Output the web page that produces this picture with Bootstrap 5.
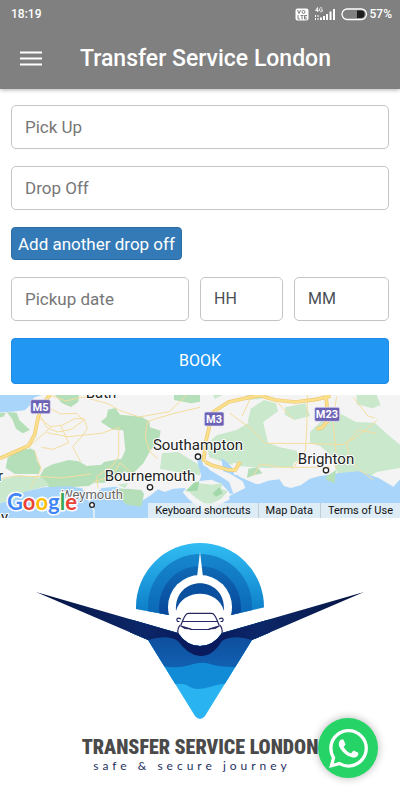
<!DOCTYPE html>
<html lang="en">
<head>
<meta charset="utf-8">
<meta name="viewport" content="width=device-width, initial-scale=1">
<title>Transfer Service London</title>
<link href="https://cdn.jsdelivr.net/npm/bootstrap@5.3.0/dist/css/bootstrap.min.css" rel="stylesheet">
<style>
body { font-family: Roboto, "Liberation Sans", sans-serif; background: #fff; color: #222; }
.app-header { background: #808080; color: #fff; box-shadow: 0 1px 4px rgba(0,0,0,.3); }
.status-bar { height: 28px; padding: 0 8px 0 11px; font-size: 12px; line-height: 28px; font-weight: 500; }
.status-bar svg { display: block; }
.title-bar { height: 61px; padding: 0 20px; gap: 38px; }
.title-bar h1 { font-size: 23px; line-height: 28px; font-weight: 500; }
.menu-btn { color: #fff; border: 0; border-radius: 0; line-height: 0; }
.booking { padding: 16px 11px 11px; gap: 17px; }
.field { height: 44px; padding: 0 13px; font-size: 17px; line-height: 24px; border: 1px solid #c4c4c4; border-radius: 5px; color: #495057; }
.field::placeholder { color: #777; opacity: 1; }
.time-row { display: grid; grid-template-columns: 178fr 83fr 95fr; gap: 11px; }
.time-row select { font-size: 16px; background-image: none; }
.add-btn { height: 33px; padding: 0 6px; font-size: 17px; line-height: 24px; background: #337ab7; border: 1px solid #2e6da4; border-radius: 4px; color: #fff; }
.book-btn { height: 46px; font-size: 16px; line-height: 24px; background: #2196f3; border: 1px solid #1d8be4; border-radius: 4px; color: #fff; }
.map-art text { font-family: Roboto, "Liberation Sans", sans-serif; paint-order: stroke; stroke: #fff; stroke-width: 2px; stroke-linejoin: round; fill: #222; font-size: 15px; }
.map-art .shield-label { font-size: 11px; font-weight: 700; fill: #fff; stroke: none; }
.map-art .faded-label { font-size: 13px; fill: #666; }
.map-art .map-brand { font-family: Lato, "Liberation Sans", sans-serif; font-size: 22px; font-weight: 700; stroke-width: 3px; }
.map-links { right: 0; bottom: 0; height: 15px; background: rgba(235,241,245,.8); font-size: 11px; line-height: 15px; }
.map-links a { color: #111; text-decoration: none; padding: 0 7px; }
.map-links a + a { border-left: 1px solid #c3ccd3; }
.brand { padding: 16px 30px 24px; }
.brand-name { font-family: "Roboto Condensed", "Open Sans Condensed", Roboto, sans-serif; font-size: 20px; line-height: 26px; font-weight: 900; color: #4a4a4a; }
.brand-tag { font-family: Lato, sans-serif; font-size: 12px; line-height: 12px; letter-spacing: 4px; color: #25315f; }
.chat-btn { right: 22px; bottom: 22px; width: 60px; height: 60px; background: #25d366; box-shadow: 0 0 8px rgba(0,0,0,.3); }
</style>
</head>
<body>
<header class="app-header position-relative">
  <div class="status-bar d-flex align-items-center justify-content-between">
    <span>18:19</span>
    <div class="d-flex align-items-center">
      <svg width="76" height="16" viewBox="294 5 76 16" aria-hidden="true">
        <rect x="295.500" y="7.500" width="13" height="12" rx="2" fill="#fff"/>
        <g fill="none" stroke="#808080" stroke-width="1"><path d="M297.500 9l1.500 3.500 1.500-3.500"/><circle cx="303.500" cy="11" r="1.500"/><path d="M298 14v4h2M300.500 14.500h3M302 14.500v4M307 14.500h-2.500v3.500h2.500M304.500 16.200h2"/></g>
        <g fill="none" stroke="#fff" stroke-width=".9"><path d="M317.600 11V6.500l-2 3h3M322.300 7.200c-1-.9-2.800-.5-2.800 1.600s1.800 2.500 2.800 1.400v-1.400h-1.300"/></g>
        <path d="M315.500 14v5M318 14v5" stroke="#fff" stroke-width="1" stroke-dasharray="2 1"/>
        <path d="M321 19v-2.500M324 19v-4M327 19v-6M330.500 19v-8.500M334 19V8" stroke="#fff" stroke-width="2"/>
        <rect x="342" y="8" width="24.500" height="10.500" rx="5.200" fill="none" stroke="#fff" stroke-width="1.300"/>
        <path d="M357 9.500h4q3.500 0 3.500 3.700t-3.500 3.800h-4z" fill="#1d1d1d"/>
      </svg>
      <span>57%</span>
    </div>
  </div>
  <div class="title-bar d-flex align-items-center">
    <button type="button" class="menu-btn btn p-0" aria-label="Menu">
      <svg width="22" height="16" viewBox="0 0 22 16"><path d="M0 1.500h22M0 7.500h22M0 13.500h22" stroke="#fff" stroke-width="2.200"/></svg>
    </button>
    <h1 class="m-0 text-nowrap">Transfer Service London</h1>
  </div>
</header>
<main>
  <form class="booking d-flex flex-column">
    <input class="field form-control" type="text" placeholder="Pick Up" aria-label="Pick Up">
    <input class="field form-control" type="text" placeholder="Drop Off" aria-label="Drop Off">
    <button type="button" class="add-btn btn align-self-start">Add another drop off</button>
    <div class="time-row">
      <input class="field form-control" type="text" placeholder="Pickup date" aria-label="Pickup date">
      <select class="field form-control" aria-label="Hour"><option>HH</option></select>
      <select class="field form-control" aria-label="Minute"><option>MM</option></select>
    </div>
    <button type="button" class="book-btn btn p-0 w-100">BOOK</button>
  </form>
  <section class="position-relative overflow-hidden" aria-label="Map">
    <svg class="map-art d-block w-100" viewBox="0 5 400 123">
      <rect y="5" width="400" height="123" fill="#f4f4f4"/>
      <g transform="scale(.33333)">
        <g fill="#b4dfb8">
          <path d="M20 66l30 2 8 22 32 30-22 10-20-14-12-30zM165 15h72l-2 20-22 16-28-12zM0 68l18 0-8 12-10 2zM85 172l20 10 6 32 12 16-8 22-70 0-28-18 6-30 26-24 42-4z"/>
          <path d="M132 236l22-12 52-14 30 4 24 14 44-4 8-8 50-10 14 20-4 24-44 22-16 6-30 0-16 10-60 4-50 2-30-12-6-24z"/>
          <path d="M302 95l18-14 4-22 22-5 14 20 64 6 24 14 2 18 32 10-6 34-24 24-22 40-26 25-14 8-20-12-6-34 12-26-6-60-30-2-18-10z"/>
          <path d="M522 15h78v20l-26 5-52-10z"/>
        </g>
        <g fill="#cae8cc">
          <path d="M0 270l58-14 70 8 20 22-60 16-40 40-48-4zM486 190l48-4 66 40v30l-70-10-50-10zM352 284l32-4-8 14z"/>
          <path d="M620 162l30-26 60-16 40-24 40 2 14 60 36 14 50 10 8 28-40 22-60 2-90-6-80-26zM744 92l8-36 40-26 36 10 6 24-28 20-26 20-32 8zM856 52l60-12 14 38-46 12-30-16zM930 126l34-32 48-28 56 30 56 2 40 36 36 30v70l-70 12-60 40-54-24-10-28-10-36-36-30-30-10zM640 15h28l-24 12zM740 15h60l-20 12-44 4zM1070 15h60l12 30-24 10-48-12zM840 226l24-26 26-6-14 40z"/>
        </g>
        <g fill="#a9d5fb">
          <path d="M0 15h125l-24 8-8 20-18 18-42 4-33 2z"/>
          <path d="M0 340l40-10 32-24 60-14 74-3 40 6 16 24 8 28 10 14v23H0z"/>
          <path d="M284 384l0-24-16-24 14-20 24-22 40-4 40 14 44 26 22-14 22-18 20 8 26-10 34-2 32 30h80l14-2 56-28-8-20-40-24-18-6-6-40 20 14 34 42 50 22 10 0 26-10 34-4 14 20 20 6 30-8 28-20 30-8 66-10 50-4 60 20 44 26 28-30 36-8 45-10v156z"/>
          <path d="M590 205l14-2 24 36 40 24 20 14 12 34-40 0-44-6-26-16 14-30z"/>
        </g>
        <path d="M352 296l30 0 42 4 8 12-8 38-44-6-24-22z" fill="#b4dfb8"/>
        <path d="M548 307l18-20 34-14 34-4 30 12 24 26 0 22-32 16-32 20-24-8-34-30z" fill="#f4f4f4"/>
        <path d="M560 300l36-20 40 4 30-4-2 16 20 8-22 24-40 18-34-22z" fill="#cae8cc"/>
        <path d="M556 304l26-26 16-4-6 28zM638 310l20-18 10 18-20 10z" fill="#a2d8aa"/>
        <path d="M636 240l-26-14-8-28 18-6 6 34 16 16M698 218l22 4-4 34-14-2z" fill="#f4f4f4"/>
        <path d="M745 236l28-4 14 18-26 6-20 8zM976 262l32-22-4 40-24-10z" fill="#b4dfb8"/>
        <g fill="none" stroke="#f5dda0" stroke-width="3">
          <path d="M132 46l50 26 48-2 20 22-36 26-42 8-32-14-22-40M148 15l50 18 50-12 76 20 34 20 60 20 90-16 50-48M112 80l40 30 34-4 38-20 28 0 10 30-22 30-22 24 24 46M94 164l32-28 28-26M140 128l64 12 100-10 52-18M160 178l46-20-24-52M160 178l-36-6M356 112v86l-16 26-50 36 4 36M442 94l-6 48 14 44 24 20M442 94l80-24 78-18M280 276l56-18 24-40 40 36M104 184l20 54-32 52M0 266l46-8 82 2 54 4 90-12"/>
          <path d="M726 78l24-50 50-13M690 70l60 44 46 46 120 0 110 4 46-24 60-50M922 15l0 20-2 86-4 60-40 58M1010 20l-12 68 10 100 0 50M1040 160l36-40 54 10M1080 240l40 30M760 258l20-36 60 10 150 0M820 24l60 64M1000 70l-14 30M1060 22l44 56 20 6M1040 160l8 40 24 34"/>
        </g>
        <g fill="none" stroke="#efc76b" stroke-width="11"><path d="M150 15l-28 34-12 54-6 30-18 34-36 16-50 22M610 216l8-64 12-50 10-36 46-30 80-18 28-3M616 216l20 10 50 14 20 0 14-24M784 18l42 12 60 6 64-8 42-10M978 15l6 76-18 22-16 4"/></g>
        <g fill="none" stroke="#fbe08d" stroke-width="7"><path d="M150 15l-28 34-12 54-6 30-18 34-36 16-50 22M610 216l8-64 12-50 10-36 46-30 80-18 28-3M616 216l20 10 50 14 20 0 14-24M784 18l42 12 60 6 64-8 42-10M978 15l6 76-18 22-16 4"/></g>
        <g fill="#6d63b5" stroke="#e4e0f6" stroke-width="2"><rect x="92" y="29" width="59" height="42" rx="5"/><rect x="613" y="66" width="59" height="42" rx="5"/><rect x="944" y="52" width="75" height="42" rx="5"/></g>
        <g fill="#fff" stroke="#222" stroke-width="4"><circle cx="594" cy="200" r="8"/><circle cx="450" cy="292" r="8"/><circle cx="276" cy="345" r="7"/><circle cx="978" cy="241" r="8"/></g>
      </g>
      <text class="shield-label" x="40.500" y="21" text-anchor="middle">M5</text>
      <text class="shield-label" x="214" y="33" text-anchor="middle">M3</text>
      <text class="shield-label" x="327" y="28" text-anchor="middle">M23</text>
      <text x="101" y="8" text-anchor="middle">Bath</text>
      <text x="198" y="60" text-anchor="middle">Southampton</text>
      <text x="150" y="91" text-anchor="middle">Bournemouth</text>
      <text x="326" y="74" text-anchor="middle">Brighton</text>
      <text class="faded-label" x="92" y="109" text-anchor="middle">Weymouth</text>
      <text x="3" y="91" text-anchor="end">Exeter</text>
      <text x="8" y="132" text-anchor="end">Torquay</text>
      <text class="map-brand" x="7" y="120"><tspan fill="#4285f4">G</tspan><tspan fill="#ea4335">o</tspan><tspan fill="#fbbc05">o</tspan><tspan fill="#4285f4">g</tspan><tspan fill="#34a853">l</tspan><tspan fill="#ea4335">e</tspan></text>
    </svg>
    <nav class="map-links position-absolute d-flex text-nowrap" aria-label="Map links"><a href="#">Keyboard shortcuts</a><a href="#">Map Data</a><a href="#">Terms of Use</a></nav>
  </section>
  <section class="brand text-center">
    <svg class="d-block w-100" viewBox="30 534 340 200" aria-hidden="true">
      <defs>
        <linearGradient id="g1" x1="0" y1="0" x2="0" y2="1"><stop offset="0" stop-color="#31bdf3"/><stop offset=".55" stop-color="#0c7dc8"/></linearGradient>
        <linearGradient id="g2" x1="0" y1="0" x2="0" y2="1"><stop offset="0" stop-color="#1686cd"/><stop offset=".6" stop-color="#0b68b7"/></linearGradient>
        <linearGradient id="g3" x1="0" y1="0" x2="0" y2="1"><stop offset="0" stop-color="#0f6ab5"/><stop offset=".6" stop-color="#07479a"/></linearGradient>
        <linearGradient id="g4" x1="0" y1="0" x2="0" y2="1"><stop offset="0" stop-color="#0d4592"/><stop offset="1" stop-color="#1160b2"/></linearGradient>
        <linearGradient id="g5" x1="0" y1="0" x2="1" y2="0"><stop offset="0" stop-color="#071440"/><stop offset=".33" stop-color="#0c2768"/><stop offset=".45" stop-color="#091b5c"/><stop offset=".55" stop-color="#091b5c"/><stop offset=".67" stop-color="#0c2768"/><stop offset="1" stop-color="#071440"/></linearGradient>
        <clipPath id="arch"><path d="M130 536H270V606L231 615H169L130 608z"/></clipPath>
        <clipPath id="cone"><path d="M36 592L178 633Q187 646 200 646T222 633L364 592L252 640L205 716Q200 722 195 716L148 640z"/></clipPath>
      </defs>
      <g clip-path="url(#arch)">
        <circle cx="200" cy="607" r="64" fill="url(#g1)"/>
        <circle cx="200" cy="606" r="52" fill="url(#g2)"/>
        <circle cx="200" cy="607" r="41" fill="url(#g3)"/>
        <circle cx="200" cy="607" r="32" fill="#fff"/>
      </g>
      <path d="M200 552L203 577H197z" fill="#fff"/>
      <path d="M176 611C174 574 226 574 224 611C218 588 182 588 176 611z" fill="#0b4f9f"/>
      <g clip-path="url(#cone)">
        <rect x="130" y="590" width="140" height="132" fill="#29b4f1"/>
        <path d="M130 684h46q8-1 14 3t20 0 16-3h44v-54H130z" fill="#118bd6"/>
        <path d="M130 666h32q16 3 28-1t20-1 24 3h36v-47H130z" fill="url(#g4)"/>
        <path d="M30 590H370V640H252Q233 634 222 641Q212 657 200 656T178 641Q167 634 148 640H30z" fill="url(#g5)"/>
      </g>
      <g fill="none" stroke="#25275f" stroke-width="1.200" stroke-linejoin="round">
        <path d="M181 625Q185 613.500 188 613.300H212Q215 613.500 219 625M183 621.500H217M180.500 625Q177 628 178 634M219.500 625Q223 628 222 634M181 619c-4-2-5 0-3.500 2.500h2M219 619c4-2 5 0 3.500 2.500h-2M190 629.500H210"/>
        <path d="M181 626l10 3-6-.5zM219 626l-10 3 6-.5z" fill="#7885b5"/>
      </g>
    </svg>
    <div class="brand-name text-nowrap">TRANSFER SERVICE LONDON</div>
    <div class="brand-tag text-nowrap pe-3">safe &amp; secure journey</div>
  </section>
</main>
<a href="#" class="chat-btn position-fixed rounded-circle d-flex align-items-center justify-content-center" aria-label="WhatsApp chat">
  <svg width="39" height="39" viewBox="0 0 24 24" fill="#fff"><path d="M17.472 14.382c-.297-.149-1.758-.867-2.030-.967-.273-.099-.471-.148-.67.15-.197.297-.767.966-.94 1.164-.173.199-.347.223-.644.075-.297-.15-1.255-.463-2.390-1.475-.883-.788-1.480-1.761-1.653-2.059-.173-.297-.018-.458.13-.606.134-.133.298-.347.446-.52.149-.174.198-.298.298-.497.099-.198.05-.371-.025-.52-.075-.149-.669-1.612-.916-2.207-.242-.579-.487-.5-.669-.51-.173-.008-.371-.01-.57-.01-.198 0-.52.074-.792.372-.272.297-1.040 1.016-1.040 2.479 0 1.462 1.065 2.875 1.213 3.074.149.198 2.096 3.200 5.077 4.487.709.306 1.262.489 1.694.625.712.227 1.360.195 1.871.118.571-.085 1.758-.719 2.006-1.413.248-.694.248-1.289.173-1.413-.074-.124-.272-.198-.57-.347m-5.421 7.403h-.004a9.870 9.870 0 01-5.031-1.378l-.361-.214-3.741.982.998-3.648-.235-.374a9.860 9.860 0 01-1.510-5.260c.001-5.450 4.436-9.884 9.888-9.884 2.640 0 5.122 1.030 6.988 2.898a9.825 9.825 0 012.893 6.994c-.003 5.450-4.437 9.884-9.885 9.884m8.413-18.297A11.815 11.815 0 0012.050 0C5.495 0 .16 5.335.157 11.892c0 2.096.547 4.142 1.588 5.945L.057 24l6.305-1.654a11.882 11.882 0 005.683 1.448h.005c6.554 0 11.890-5.335 11.893-11.893a11.821 11.821 0 00-3.480-8.413z"/></svg>
</a>
<script src="https://cdn.jsdelivr.net/npm/bootstrap@5.3.0/dist/js/bootstrap.bundle.min.js"></script>
</body>
</html>
